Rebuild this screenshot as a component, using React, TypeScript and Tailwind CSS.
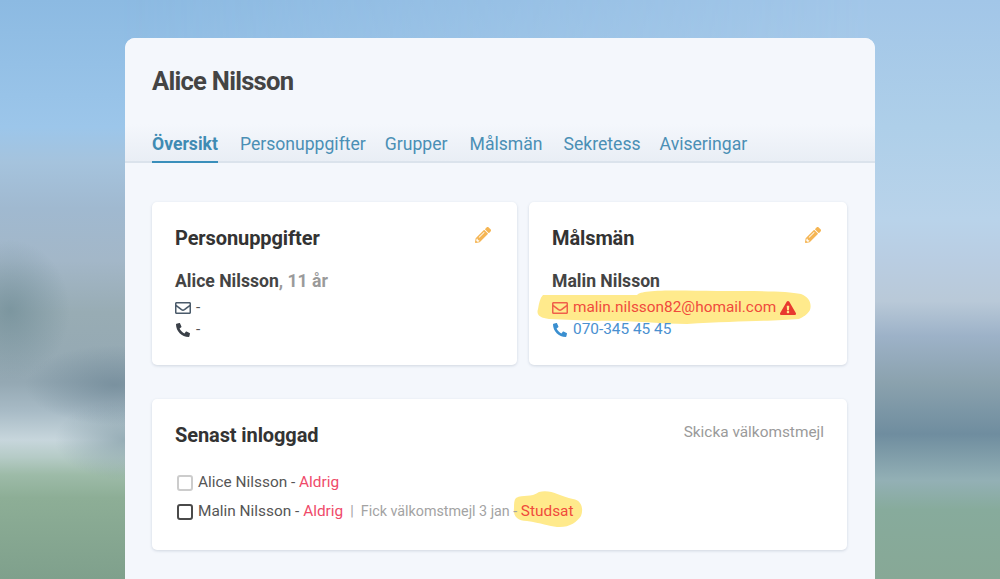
function Pencil() {
  return (
    <svg viewBox="0 0 512 512" className="h-4 w-4 fill-[#f5b553]">
      <path d="M497.9 142.1l-46.1 46.1c-4.7 4.7-12.3 4.7-17 0l-111-111c-4.7-4.7-4.7-12.3 0-17l46.1-46.1c18.7-18.7 49.1-18.7 67.9 0l60.1 60.1c18.8 18.7 18.8 49.1 0 67.9zM284.2 99.8L21.6 362.4.4 483.9c-2.9 16.4 11.4 30.6 27.8 27.8l121.5-21.3 262.6-262.6c4.7-4.7 4.7-12.3 0-17l-111-111c-4.8-4.7-12.4-4.7-17.1 0zM124.1 339.9c-5.5-5.5-5.5-14.3 0-19.8l154-154c5.5-5.5 14.3-5.5 19.8 0s5.5 14.3 0 19.8l-154 154c-5.5 5.5-14.3 5.5-19.8 0zM88 424h48v36.3l-64.5 11.3-31.1-31.1L51.7 376H88v48z" />
    </svg>
  );
}

function Envelope({ className }: { className: string }) {
  return (
    <svg viewBox="0 0 512 512" className={`relative h-4 w-4 shrink-0 ${className}`}>
      <path d="M464 64H48C21.49 64 0 85.49 0 112v288c0 26.51 21.49 48 48 48h416c26.51 0 48-21.49 48-48V112c0-26.51-21.49-48-48-48zm0 48v40.805c-22.422 18.259-58.168 46.651-134.587 106.49-16.841 13.247-50.201 45.072-73.413 44.701-23.208.375-56.579-31.459-73.413-44.701C106.18 199.465 70.425 171.067 48 152.805V112h416zM48 400V214.398c22.914 18.251 55.409 43.862 104.938 82.646 21.857 17.205 60.134 55.186 103.062 54.955 42.717.231 80.509-37.199 103.053-54.947 49.528-38.783 82.032-64.401 104.947-82.653V400H48z" />
    </svg>
  );
}

function PhoneIcon({ className }: { className: string }) {
  return (
    <svg viewBox="0 0 512 512" className={`relative h-[14px] w-4 shrink-0 -scale-x-100 ${className}`}>
      <path d="M493.4 24.6l-104-24c-11.3-2.6-22.9 3.3-27.5 13.9l-48 112c-4.2 9.8-1.4 21.3 6.9 28l60.6 49.6c-36 76.7-98.9 140.5-177.2 177.2l-49.6-60.6c-6.8-8.3-18.2-11.1-28-6.9l-112 48C3.9 366.5-2 378.1.6 389.4l24 104C27.1 504.2 36.7 512 48 512c256.1 0 464-207.5 464-464 0-11.2-7.7-20.9-18.6-23.4z" />
    </svg>
  );
}

function Card({ className, children }: { className: string; children: React.ReactNode }) {
  return (
    <div className={`relative rounded-[5px] bg-white shadow-[0_1px_3px_rgba(70,90,120,0.2)] ${className}`}>
      {children}
    </div>
  );
}

export default function App() {
  const tabs = ['Personuppgifter', 'Grupper', 'Målsmän', 'Sekretess', 'Aviseringar'];

  return (
    <div className="relative h-[579px] overflow-hidden font-['Roboto',sans-serif]">
      {/* blurred photo behind the panel */}
      <div className="absolute inset-0 bg-[linear-gradient(180deg,#8cbae2_0%,#9cc6ea_22%,#a5c3dd_28%,#a0b9d0_36%,#a3b7c8_45%,#98acb4_54%,#94a8b3_66%,#a8bbc6_71%,#c7d6dc_76%,#b5cbc6_79%,#9dbba8_82%,#8dae96_86%,#7fa08c_100%)]" />
      <div className="absolute inset-0 bg-[radial-gradient(ellipse_60px_70px_at_10px_310px,rgba(105,135,145,0.6),transparent),radial-gradient(ellipse_90px_40px_at_115px_385px,rgba(110,135,150,0.7),transparent),radial-gradient(ellipse_70px_40px_at_125px_440px,rgba(135,160,170,0.75),transparent)]" />
      <div className="absolute inset-0 bg-[linear-gradient(180deg,#a2c6e8_0%,#aecfe9_22%,#b9d3ea_38%,#b9cde2_45%,#b9c9d8_52%,#9db2c8_58%,#8ba2ae_66%,#6f8d9f_75%,#93b0b5_83%,#87ab9c_88%,#87a896_100%)] [mask-image:linear-gradient(90deg,transparent_12%,black_88%)]" />

      <div className="relative mx-auto mt-[38px] h-[560px] w-[750px] rounded-t-[10px] bg-[#f4f7fc]">
        <div className="h-[125px] rounded-t-[10px] border-b-2 border-[#dbe3ec] bg-[linear-gradient(180deg,#f4f7fc_0%,#f4f7fc_70%,#e9eef5_100%)] px-[27px] pt-[25px]">
          <h1 className="text-[25.6px] leading-[36px] font-bold tracking-[-0.74px] text-[#444444]">Alice Nilsson</h1>
          <div className="mt-[32px] flex text-[17.6px] leading-[24px] text-[#4a8fb5]">
            <div className="mr-[22px] h-[32px] border-b-2 border-[#3a8fbb] pt-[1px] font-bold text-[#3f8bb3]">Översikt</div>
            <div className="mr-[19px] pt-[1px]">{tabs[0]}</div>
            <div className="mr-[22px] pt-[1px]">{tabs[1]}</div>
            <div className="mr-[21px] pt-[1px]">{tabs[2]}</div>
            <div className="mr-[19px] pt-[1px]">{tabs[3]}</div>
            <div className="pt-[1px]">{tabs[4]}</div>
          </div>
        </div>

        <div className="px-[27px] pt-[39px]">
          <div className="flex gap-3">
            <Card className="h-[163px] w-[365px] px-[23px] pt-[22px]">
              <div className="flex items-start justify-between pr-[3px]">
                <h2 className="text-[20px] leading-[28px] font-bold tracking-[-0.1px] text-[#333333]">Personuppgifter</h2>
                <div className="pt-[3px]"><Pencil /></div>
              </div>
              <div className="mt-[17px] text-[17.6px] leading-[24px] font-bold text-[#444444]">
                Alice Nilsson<span className="text-[#9a9a9a]">, 11 år</span>
              </div>
              <div className="mt-[4px] flex h-[22px] items-center gap-[5px] text-[15.4px] text-[#555555]">
                <Envelope className="fill-[#4a5a6a]" />-
              </div>
              <div className="flex h-[22px] items-center gap-[5px] text-[15.4px] text-[#555555]">
                <PhoneIcon className="fill-[#3a4048]" />-
              </div>
            </Card>

            <Card className="h-[163px] w-[318px] px-[23px] pt-[22px]">
              <div className="flex items-start justify-between pr-[3px]">
                <h2 className="text-[20px] leading-[28px] font-bold tracking-[-0.1px] text-[#333333]">Målsmän</h2>
                <div className="pt-[3px]"><Pencil /></div>
              </div>
              <div className="mt-[17px] text-[17.6px] leading-[24px] font-bold text-[#444444]">Malin Nilsson</div>
              <div className="relative mt-[4px] flex h-[22px] items-center gap-[5px] text-[15.4px] text-[#f04a3c]">
                <svg viewBox="0 0 275 36" className="absolute -top-[8px] -left-[15px] h-[36px] w-[275px] fill-[#ffea8c]">
                  <path d="M6 6 L100 6 C104 1 130 1 180 2 C220 2 250 2 264 5 C272 8 275 14 273 21 C270 26 266 28 262 30 C240 32 200 32 150 35 C120 35 90 31 60 32 L12 30 C3 29 -1 26 1 20 C2 14 3 9 6 6 Z" />
                </svg>
                <Envelope className="fill-[#f0604a]" />
                <span className="relative">malin.nilsson82@homail.com</span>
                <svg viewBox="0 0 576 512" className="relative -ml-[1px] h-4 w-4 fill-[#e8392f]">
                  <path d="M569.517 440.013C587.975 472.007 564.806 512 527.94 512H48.054c-36.937 0-59.999-40.055-41.577-71.987L246.423 23.985c18.467-32.009 64.72-31.951 83.154 0l239.94 416.028zM288 354c-25.405 0-46 20.595-46 46s20.595 46 46 46 46-20.595 46-46-20.595-46-46-46zm-43.673-165.346l7.418 136c.347 6.364 5.609 11.346 11.982 11.346h48.546c6.373 0 11.635-4.982 11.982-11.346l7.418-136c.375-6.874-5.098-12.654-11.982-12.654h-63.383c-6.884 0-12.356 5.78-11.981 12.654z" />
                </svg>
              </div>
              <div className="relative flex h-[22px] items-center gap-[5px] text-[15.4px] text-[#4a90d0]">
                <PhoneIcon className="fill-[#3a8fd0]" />
                070-345 45 45
              </div>
            </Card>
          </div>

          <Card className="mt-[34px] h-[151px] w-[695px] px-[23px] pt-[22px]">
            <div className="flex items-start justify-between">
              <h2 className="text-[20px] leading-[28px] font-bold tracking-[-0.1px] text-[#333333]">Senast inloggad</h2>
              <a className="text-[15.4px] leading-[22px] text-[#9a9a9a]">Skicka välkomstmejl</a>
            </div>
            <div className="mt-[19px] flex h-[29px] items-center text-[15.4px] text-[#555555]">
              <div className="mr-[5px] ml-[2px] h-4 w-4 rounded-[3px] border-2 border-[#cccccc] bg-white" />
              Alice Nilsson -&nbsp;<span className="text-[#ef4a6a]">Aldrig</span>
            </div>
            <div className="flex h-[29px] items-center text-[15.4px] text-[#555555]">
              <div className="mr-[5px] ml-[2px] h-4 w-4 rounded-[3px] border-2 border-[#4a4a4a] bg-white" />
              Malin Nilsson -&nbsp;<span className="text-[#ef4a6a]">Aldrig</span>
              <span className="relative ml-[7px] text-[14.3px] text-[#a3a3a3]">
                <svg viewBox="0 0 70 38" className="absolute -top-[10px] left-[163px] h-[38px] w-[70px] fill-[#ffea8c]">
                  <path d="M3 8 C10 4 18 8 26 2 C38 -1 46 6 60 9 C68 10 71 18 68 26 C64 32 56 38 44 37 C36 36 28 33 14 31 C4 31 0 26 1 18 C1 14 1 10 3 8 Z" />
                </svg>
                <span className="relative">|&nbsp;&nbsp;Fick välkomstmejl 3 jan -&nbsp;</span>
                <span className="relative text-[15.4px] text-[#f04a3c]">Studsat</span>
              </span>
            </div>
          </Card>
        </div>
      </div>
    </div>
  );
}
